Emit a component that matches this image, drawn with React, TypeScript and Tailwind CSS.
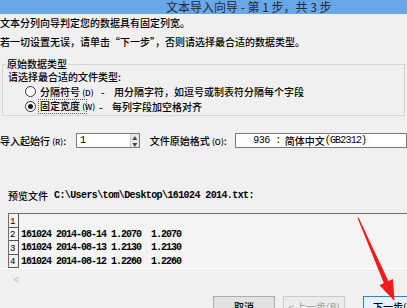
import React from "react";

const rows = [
  { n: "1", text: "" },
  { n: "2", text: "161024 2014-08-14 1.2070  1.2070" },
  { n: "3", text: "161024 2014-08-13 1.2130  1.2130" },
  { n: "4", text: "161024 2014-08-12 1.2260  1.2260" },
];

function Radio({ checked }: { checked?: boolean }) {
  return (
    <span className="flex h-[11px] w-[11px] items-center justify-center rounded-full border border-[#333] bg-white">
      {checked && <span className="h-[5px] w-[5px] rounded-full bg-[#1a1a1a]" />}
    </span>
  );
}

export default function App() {
  return (
    <div className="relative h-[308px] w-[407px] overflow-hidden whitespace-nowrap bg-[#f0f0f0] font-['Noto_Sans_CJK_SC',sans-serif] text-[10px] font-medium text-black">
      {/* Title bar */}
      <div className="flex h-[14px] items-center bg-[#6aa7e8] pl-[166px] text-[12px] font-normal leading-none text-[#1f2a36]">
        文本导入向导 - 第 1 步，共 3 步
      </div>

      <div className="mt-[2px] h-[14px] leading-[14px]">文本分列向导判定您的数据具有固定列宽。</div>
      <div className="mt-[5px] h-[14px] leading-[14px]">若一切设置无误，请单击“下一步”，否则请选择最合适的数据类型。</div>

      {/* Group box */}
      <div className="relative ml-[2px] mr-[2px] mt-[15px] border border-[#d5d5d5] pb-[2px]">
        <span className="absolute -top-[7px] left-[3px] bg-[#f0f0f0] px-px leading-[12px]">原始数据类型</span>
        <div className="ml-[5px] mt-[5px] h-[14px] leading-[14px]">请选择最合适的文件类型:</div>
        <div className="flex h-[14px] items-center">
          <span className="ml-[22px]"><Radio /></span>
          <span className="ml-[4px] w-[58px]">
            分隔符号 <span className="text-[8px]">(D)</span>
          </span>
          <span className="ml-[3px] w-[13px]">-</span>
          <span>用分隔字符，如逗号或制表符分隔每个字段</span>
        </div>
        <div className="mt-px flex h-[14px] items-center">
          <span className="ml-[22px]"><Radio checked /></span>
          <span className="ml-[2px] w-[49px] border border-dotted border-[#555] px-px leading-[12px]">
            固定宽度 <span className="text-[8px]">(W)</span>
          </span>
          <span className="ml-[12px] w-[13px]">-</span>
          <span>每列字段加空格对齐</span>
        </div>
      </div>

      {/* Start row / origin */}
      <div className="mt-[17px] flex h-[15px] items-center">
        <span className="w-[80px]">
          导入起始行 <span className="text-[8px]">(R)</span>:
        </span>
        <div className="flex h-[15px] w-[67px] items-center border border-[#7a7a7a] bg-white pl-[3px]">
          <span className="flex-1 font-['Liberation_Mono',monospace] text-[10px]">1</span>
          <div className="flex h-full w-[9px] flex-col items-center justify-center border-l border-[#c8c8c8] bg-[#e8e8e8] text-[5px] leading-[6px] text-[#444]">
            <span>▲</span>
            <span>▼</span>
          </div>
        </div>
        <span className="ml-[10px] w-[90px]">
          文件原始格式 <span className="text-[8px]">(O)</span>:
        </span>
        <div className="flex h-[15px] w-[180px] items-center border border-[#7a7a7a] bg-white pl-[17px]">
          <span className="font-['Liberation_Mono',monospace] text-[10px] tracking-[-0.5px]">936 : </span>
          <span className="ml-[4px]">简体中文</span>
          <span className="font-['Liberation_Mono',monospace] text-[10px] tracking-[-0.8px]">(GB2312)</span>
        </div>
      </div>

      <div className="ml-[8px] mt-[40px] flex h-[14px] items-center">
        <span>预览文件</span>
        <span className="ml-[6px] font-['Liberation_Mono',monospace] text-[10px] font-bold tracking-[-0.6px]">
          C:\Users\tom\Desktop\161024 2014.txt:
        </span>
      </div>

      {/* Preview */}
      <div className="ml-[8px] mt-[11px] h-[55px] overflow-hidden border-l border-t border-[#6d6d6d] bg-[#f4f4f4]">
        {rows.map((r) => (
          <div key={r.n} className="flex h-[13.5px]">
            <div className="flex w-[10px] items-end border-b border-r border-[#555] pl-px font-['Liberation_Mono',monospace] text-[9px] leading-[10px]">
              {r.n}
            </div>
            <div className="ml-[2px] flex items-center whitespace-pre font-['Liberation_Mono',monospace] text-[10px] font-bold tracking-[-1px]">
              {r.text}
            </div>
          </div>
        ))}
      </div>
      <div className="flex h-[22px] items-center border-t border-white pl-[13px] text-[11px] text-[#c4c4c4]">&lt;</div>

      {/* Buttons */}
      <div className="mt-[6px] flex h-[22px]">
        <div className="ml-[213px] flex w-[62px] shrink-0 justify-center border border-[#adadad] bg-[#e1e1e1] pt-[2px]">取消</div>
        <div className="ml-[8px] flex w-[62px] shrink-0 justify-center border border-[#cccccc] bg-[#ececec] pt-[2px] text-[#a8a8a8]">
          &lt; 上一步(B)
        </div>
        <div className="ml-[18px] flex w-[80px] shrink-0 border border-[#3c7fb1] bg-[#e5f1fb] pl-[9px] pt-[2px]">下一步(N)</div>
      </div>

      {/* Red arrow annotation */}
      <svg className="pointer-events-none absolute left-0 top-0" width="407" height="308">
        <polygon
          points="357.5,218 358.6,217.6 388.4,281.1 393,279 394.5,301 379.5,285.2 383.8,283.1"
          fill="#ee1c1c"
        />
      </svg>
    </div>
  );
}
